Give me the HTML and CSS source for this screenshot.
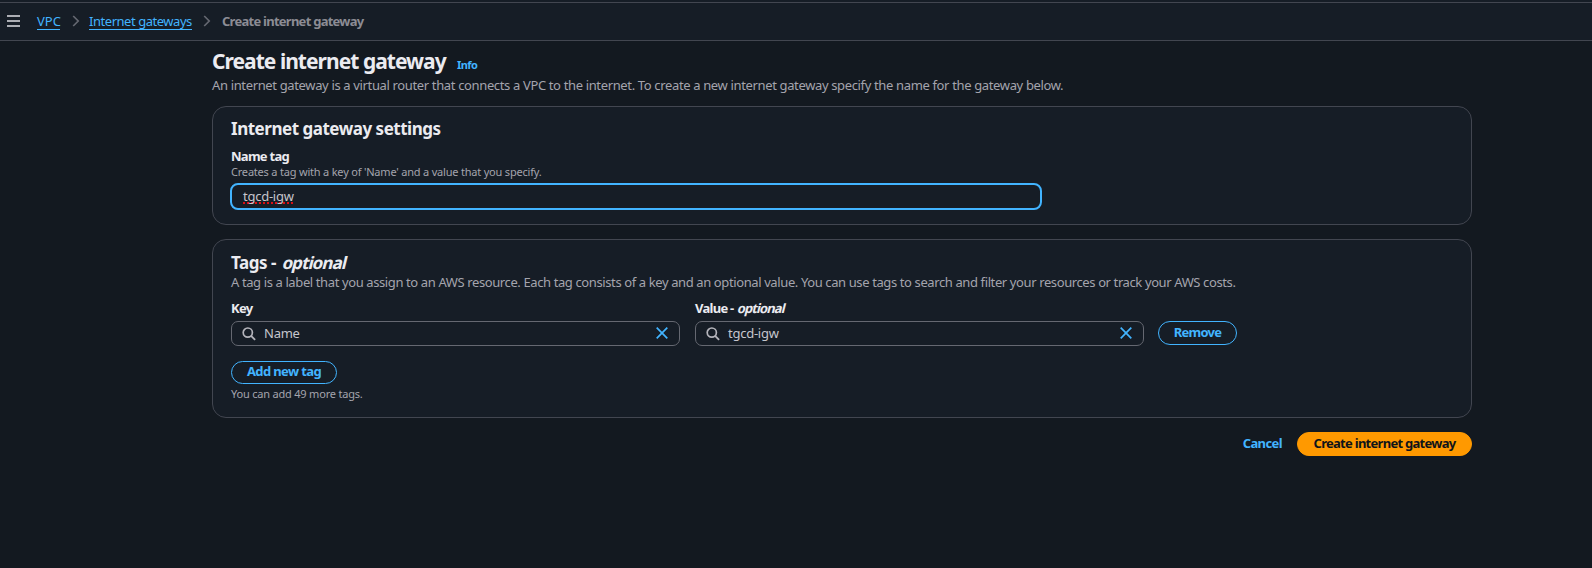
FILE: index.html
```html
<!DOCTYPE html>
<html lang="en">
<head>
<meta charset="utf-8">
<title>Create internet gateway</title>
<link rel="stylesheet" href="styles.css">
</head>
<body>
<div class="top-strip"></div>
<nav class="bar">
  <svg class="menu" width="13" height="12" viewBox="0 0 13 12"><path d="M0 1h13M0 6h13M0 11h13" stroke="#dedee3" stroke-width="1.4"/></svg>
  <a class="crumb crumb-vpc">VPC</a>
  <svg class="chevron" width="8" height="12" viewBox="0 0 8 12"><path d="M1.2 1l5 5-5 5" fill="none" stroke="#656871" stroke-width="1.7"/></svg>
  <a class="crumb crumb-list">Internet gateways</a>
  <svg class="chevron chevron-last" width="8" height="12" viewBox="0 0 8 12"><path d="M1.2 1l5 5-5 5" fill="none" stroke="#656871" stroke-width="1.7"/></svg>
  <span class="crumb-current">Create internet gateway</span>
</nav>
<main class="content">
  <header class="page-header">
    <h1>Create internet gateway</h1>
    <a class="info">Info</a>
  </header>
  <p class="desc intro">An internet gateway is a virtual router that connects a VPC to the internet. To create a new internet gateway specify the name for the gateway below.</p>

  <section class="card settings">
    <h2 class="settings-title">Internet gateway settings</h2>
    <div class="label name-label">Name tag</div>
    <div class="hint name-hint">Creates a tag with a key of 'Name' and a value that you specify.</div>
    <div class="input focused"><span class="value misspelled">tgcd-igw</span></div>
  </section>

  <section class="card tags">
    <h2 class="tags-title">Tags - <span class="slanted">optional</span></h2>
    <p class="desc tags-desc">A tag is a label that you assign to an AWS resource. Each tag consists of a key and an optional value. You can use tags to search and filter your resources or track your AWS costs.</p>
    <div class="tag-row">
      <div class="field">
        <div class="label key-label">Key</div>
        <div class="input search">
          <svg width="14" height="14" viewBox="0 0 14 14"><circle cx="5.8" cy="5.6" r="4.6" fill="none" stroke="#b4b4bb" stroke-width="1.7"/><path d="M9.1 8.9l4 4" stroke="#b4b4bb" stroke-width="1.8"/></svg>
          <span class="value value-name">Name</span>
          <svg class="clear" width="12" height="12" viewBox="0 0 12 12"><path d="M.7.7l10.6 10.6M11.3.7L.7 11.3" stroke="#42b4ff" stroke-width="1.7"/></svg>
        </div>
      </div>
      <div class="field">
        <div class="label value-label">Value - <span class="slanted">optional</span></div>
        <div class="input search">
          <svg width="14" height="14" viewBox="0 0 14 14"><circle cx="5.8" cy="5.6" r="4.6" fill="none" stroke="#b4b4bb" stroke-width="1.7"/><path d="M9.1 8.9l4 4" stroke="#b4b4bb" stroke-width="1.8"/></svg>
          <span class="value">tgcd-igw</span>
          <svg class="clear" width="12" height="12" viewBox="0 0 12 12"><path d="M.7.7l10.6 10.6M11.3.7L.7 11.3" stroke="#42b4ff" stroke-width="1.7"/></svg>
        </div>
      </div>
      <button class="btn remove">Remove</button>
    </div>
    <button class="btn add">Add new tag</button>
    <div class="hint tags-hint">You can add 49 more tags.</div>
  </section>

  <footer class="actions">
    <a class="cancel">Cancel</a>
    <button class="btn primary">Create internet gateway</button>
  </footer>
</main>
</body>
</html>
```
FILE: styles.css
```css
* { box-sizing: border-box; }
body {
  margin: 0;
  height: 568px;
  overflow: hidden;
  background: #131920;
  color: #ebebf0;
  font-family: "Noto Sans", "Open Sans", sans-serif;
  font-size: 13px;
  line-height: 18px;
  white-space: nowrap;
}
h1, h2, p { margin: 0; }
svg { display: block; flex: none; }

.top-strip { height: 2px; background: #161d26; }
.bar {
  height: 39px;
  border-top: 1px solid #424650;
  border-bottom: 1px solid #424650;
  background: #161d26;
  display: flex;
  align-items: center;
  padding: 0 0 1px 7px;
}
.crumb { color: #42b4ff; height: 17px; line-height: 17px; border-bottom: 1px solid #42b4ff; }
.crumb-vpc { margin-left: 17px; width: 23px; }
.chevron { margin: 0 9px 0 12px; }
.chevron-last { margin: 0 11px 0 11px; }
.crumb-list { width: 103px; letter-spacing: -0.46px; }
.crumb-current { color: #8c8c94; font-weight: 700; letter-spacing: -0.74px; }

.content { width: 1260px; margin-left: 212px; padding-top: 8px; }
.page-header { display: flex; height: 24px; }
h1 { font-size: 21px; line-height: 25px; font-weight: 700; width: 245px; letter-spacing: -0.97px; }
.info { color: #42b4ff; font-size: 11px; font-weight: 700; line-height: 32px; letter-spacing: -0.6px; }
.desc { color: #a4a4ad; }
.intro { margin-top: 3px; letter-spacing: -0.355px; }

.card {
  border: 1px solid #424650;
  border-radius: 14px;
  background: #161d26;
  padding: 0 18px;
}
.settings { margin-top: 12px; height: 119px; padding-top: 11px; }
.tags { margin-top: 14px; height: 179px; padding-top: 12px; }
h2 { font-size: 17px; font-weight: 700; line-height: 22px; letter-spacing: -0.48px; }
.tags-title { line-height: 21px; }
.tags-desc { letter-spacing: -0.389px; }
.slanted { display: inline-block; transform: skewX(-14deg); letter-spacing: -0.9px; margin-left: 2px; }
.tags-title .slanted { margin-left: 3px; }
.label { font-weight: 700; letter-spacing: -0.72px; }
.name-label { margin-top: 7px; }
.hint { color: #a4a4ad; font-size: 11px; line-height: 14px; letter-spacing: -0.2px; }

.input {
  display: flex;
  align-items: center;
  height: 25px;
  border: 1px solid #656871;
  border-radius: 7px;
  margin-top: 4px;
  background: #161d26;
}
.focused {
  width: 812px;
  height: 27px;
  margin-left: -1px;
  border: 2px solid #42b4ff;
  border-radius: 8px;
  padding-left: 11px;
}
.value { color: #c6c6cd; letter-spacing: -0.25px; padding-bottom: 2px; }
.misspelled { text-decoration: underline dotted #d90f14 2px; text-underline-offset: 2px; text-decoration-skip-ink: none; }
.search { padding: 0 11px 0 10px; }
.search .value { margin-left: 8px; }
.clear { margin: 0 0 1px auto; }

.tag-row { display: flex; align-items: flex-start; gap: 15px; margin-top: 8px; }
.field { width: 449px; }
.btn {
  display: flex;
  align-items: center;
  justify-content: center;
  height: 24px;
  padding: 0 0 2px;
  border: 1px solid #42b4ff;
  border-radius: 12px;
  background: transparent;
  color: #42b4ff;
  font: 700 13px/18px "Noto Sans", "Open Sans", sans-serif;
  letter-spacing: -0.72px;
}
.remove { width: 79px; margin: 22px 0 0 -1px; }
.add { width: 106px; height: 23px; margin-top: 15px; padding-bottom: 3px; letter-spacing: -0.62px; }
.tags-hint { margin-top: 3px; }

.actions { display: flex; justify-content: flex-end; align-items: center; margin-top: 14px; }
.cancel { color: #42b4ff; font-weight: 700; letter-spacing: -0.6px; margin-right: 15px; padding-bottom: 2px; }
.primary { width: 175px; background: #ff9900; border-color: #ff9900; color: #0f141a; }
```
